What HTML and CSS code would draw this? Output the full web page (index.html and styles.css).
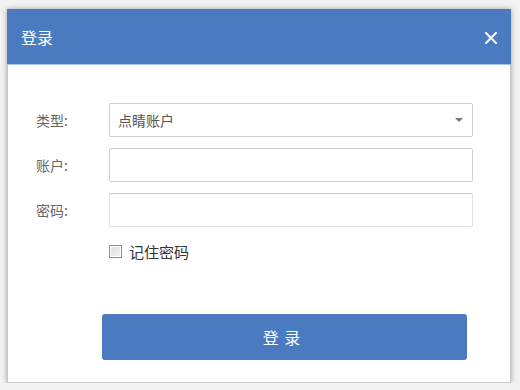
FILE: index.html
```html
<!DOCTYPE html>
<html lang="zh-CN">
<head>
  <meta charset="UTF-8" />
  <title>登录</title>
  <link rel="stylesheet" href="styles.css">
</head>
<body>

  <div class="dialog">
    <!-- Header -->
    <div class="dialog-head">
      <span class="dialog-title">登录</span>
      <span class="close-btn">
        <svg width="12" height="12" viewBox="0 0 12 12">
          <path d="M1 1 L11 11 M11 1 L1 11" stroke="#fff" stroke-width="2" stroke-linecap="round" />
        </svg>
      </span>
    </div>

    <!-- Form -->
    <div class="dialog-body">
      <div class="form-row">
        <label>类型:</label>
        <div class="field select">
          <span>点睛账户</span>
          <span class="arrow"></span>
        </div>
      </div>
      <div class="form-row">
        <label>账户:</label>
        <input class="field" type="text" />
      </div>
      <div class="form-row">
        <label>密码:</label>
        <input class="field light" type="password" />
      </div>
      <div class="remember">
        <span class="check"></span>
        <span>记住密码</span>
      </div>
      <button class="login-btn">登 录</button>
    </div>
  </div>

</body>
</html>
```

FILE: styles.css
```css
body {
  margin: 0;
  padding: 9px 0 0 7px;
  background: #f2f2f2;
  font-family: "Noto Sans CJK SC", "Noto Sans", sans-serif;
  color: #555;
}

.dialog {
  width: 502px;
  height: 372px;
  background: #fff;
  border: 1px solid #c8c8c8;
  box-shadow: 0 0 5px rgba(0, 0, 0, 0.35);
}

.dialog-head {
  height: 55px;
  background: #4a7bc1;
  border-bottom: 1px solid #a9c3e6;
  display: flex;
  align-items: center;
  justify-content: space-between;
  padding: 0 14px 0 14px;
  margin: -1px -1px 0 -1px;
  color: #fff;
}

.dialog-title {
  font-size: 16px;
}

.close-btn {
  display: flex;
  margin-top: 2px;
}

.dialog-body {
  padding: 38px 0 0 28px;
}

.form-row {
  display: grid;
  grid-template-columns: 73px 364px;
  align-items: center;
  margin-bottom: 11px;
}

.form-row label {
  font-size: 14px;
  color: #666;
}

.field {
  box-sizing: border-box;
  height: 34px;
  width: 364px;
  margin: 0;
  border: 1px solid #cfcfcf;
  border-radius: 2px;
  background: #fff;
  font-size: 14px;
  padding: 0 8px;
  outline: none;
}

.field.light {
  border-color: #dde3ea;
  border-top-color: #c8c8c8;
}

.select {
  display: flex;
  align-items: center;
  justify-content: space-between;
  color: #555;
}

.arrow {
  width: 0;
  height: 0;
  border-left: 4px solid transparent;
  border-right: 4px solid transparent;
  border-top: 4px solid #777;
  margin-right: 1px;
}

.remember {
  display: flex;
  align-items: center;
  margin: 14px 0 0 73px;
  font-size: 15px;
  color: #333;
}

.check {
  box-sizing: border-box;
  width: 13px;
  height: 13px;
  border: 1px solid #8f8f8f;
  background: linear-gradient(135deg, #dcdcdc, #f6f6f6);
  box-shadow: inset 0 0 0 1px #fff;
  margin-right: 7px;
}

.login-btn {
  display: block;
  width: 365px;
  height: 46px;
  margin: 52px 0 0 66px;
  background: #4a7bc1;
  border: none;
  border-radius: 3px;
  color: #fff;
  font-family: inherit;
  font-size: 16px;
  letter-spacing: 1px;
  padding-left: 1px;
}
```
